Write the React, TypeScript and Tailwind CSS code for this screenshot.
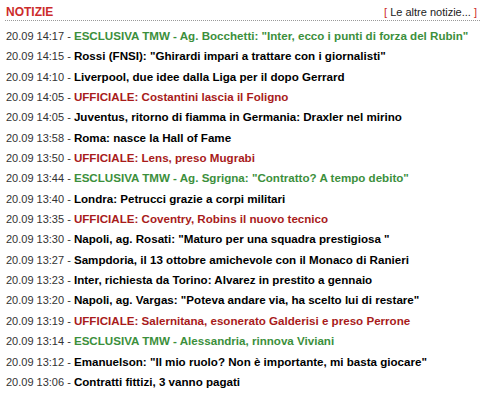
type Tone = "black" | "red" | "green";

const news: { time: string; title: string; tone: Tone }[] = [
  { time: "20.09 14:17", title: 'ESCLUSIVA TMW - Ag. Bocchetti: "Inter, ecco i punti di forza del Rubin"', tone: "green" },
  { time: "20.09 14:15", title: 'Rossi (FNSI): "Ghirardi impari a trattare con i giornalisti"', tone: "black" },
  { time: "20.09 14:10", title: "Liverpool, due idee dalla Liga per il dopo Gerrard", tone: "black" },
  { time: "20.09 14:05", title: "UFFICIALE: Costantini lascia il Foligno", tone: "red" },
  { time: "20.09 14:05", title: "Juventus, ritorno di fiamma in Germania: Draxler nel mirino", tone: "black" },
  { time: "20.09 13:58", title: "Roma: nasce la Hall of Fame", tone: "black" },
  { time: "20.09 13:50", title: "UFFICIALE: Lens, preso Mugrabi", tone: "red" },
  { time: "20.09 13:44", title: 'ESCLUSIVA TMW - Ag. Sgrigna: "Contratto? A tempo debito"', tone: "green" },
  { time: "20.09 13:40", title: "Londra: Petrucci grazie a corpi militari", tone: "black" },
  { time: "20.09 13:35", title: "UFFICIALE: Coventry, Robins il nuovo tecnico", tone: "red" },
  { time: "20.09 13:30", title: 'Napoli, ag. Rosati: "Maturo per una squadra prestigiosa "', tone: "black" },
  { time: "20.09 13:27", title: "Sampdoria, il 13 ottobre amichevole con il Monaco di Ranieri", tone: "black" },
  { time: "20.09 13:23", title: "Inter, richiesta da Torino: Alvarez in prestito a gennaio", tone: "black" },
  { time: "20.09 13:20", title: 'Napoli, ag. Vargas: "Poteva andare via, ha scelto lui di restare"', tone: "black" },
  { time: "20.09 13:19", title: "UFFICIALE: Salernitana, esonerato Galderisi e preso Perrone", tone: "red" },
  { time: "20.09 13:14", title: "ESCLUSIVA TMW - Alessandria, rinnova Viviani", tone: "green" },
  { time: "20.09 13:12", title: 'Emanuelson: "Il mio ruolo? Non è importante, mi basta giocare"', tone: "black" },
  { time: "20.09 13:06", title: "Contratti fittizi, 3 vanno pagati", tone: "black" },
];

const toneClass: Record<Tone, string> = {
  black: "text-black",
  red: "text-[#a81b1b]",
  green: "text-[#3c8f3c]",
};

export default function App() {
  return (
    <div className="h-[404px] w-[485px] bg-white font-['Liberation_Sans',Arial,sans-serif]">
      <div className="px-[5px] pt-[5px]">
        <div className="flex items-end justify-between border-b border-dotted border-[#999] pb-[1px]">
          <span className="pl-[1px] text-[12px] font-bold leading-[14px] text-[#cc2b2b]">NOTIZIE</span>
          <span className="pr-[3px] text-[11px] leading-[13px] text-[#222]">
            <span className="text-[#cc2b2b]">[</span> Le altre notizie... <span className="text-[#cc2b2b]">]</span>
          </span>
        </div>

        <ul className="pt-[4px]">
          {news.map((n, i) => (
            <li key={i} className="h-[20.35px] whitespace-nowrap pl-[1px] leading-[20px]">
              <span className="text-[11px] text-[#333]">{n.time} - </span>
              <span className={`text-[11.6px] font-bold ${toneClass[n.tone]}`}>{n.title}</span>
            </li>
          ))}
        </ul>
      </div>
    </div>
  );
}
